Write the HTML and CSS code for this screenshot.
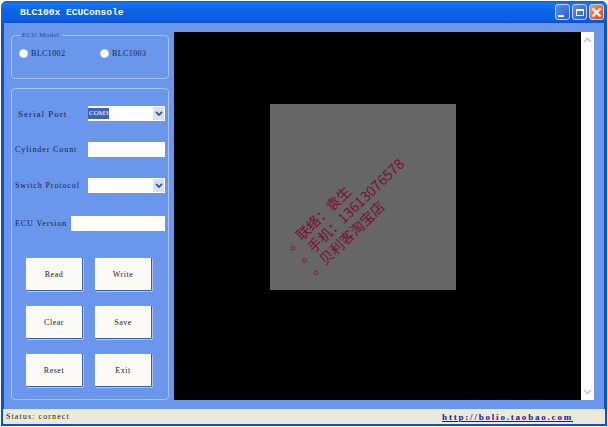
FILE: index.html
```html
<!DOCTYPE html>
<html lang="en">
<head>
    <meta charset="UTF-8">
    <meta name="viewport" content="width=device-width, initial-scale=1.0">
    <title>BLC100x ECUConsole</title>
    <link rel="stylesheet" href="styles.css">
</head>
<body>
    <div id="window">
        <div class="titleBar">
            <span class="titleText">BLC100x ECUConsole</span>
            <div class="winButtons">
                <span class="winBtn"><i class="minGlyph"></i></span>
                <span class="winBtn"><i class="maxGlyph"></i></span>
                <span class="winBtn closeBtn">
                    <svg width="13" height="13" viewBox="0 0 13 13"><path d="M2.5 2.5 L10.5 10.5 M10.5 2.5 L2.5 10.5" stroke="#ffffff" stroke-width="2.4" fill="none"/></svg>
                </span>
            </div>
        </div>
        <div class="client">
            <div class="sidePanel">
                <fieldset class="group modelGroup">
                    <legend>ECU Model</legend>
                    <label class="radioItem"><span class="radio"></span>BLC1002</label>
                    <label class="radioItem"><span class="radio"></span>BLC1003</label>
                </fieldset>
                <div class="group settingsGroup">
                    <div class="field serialRow">
                        <label>Serial Port</label>
                        <div class="combo"><span class="comboValue">COM3</span><span class="comboArrow"><svg width="8" height="6" viewBox="0 0 8 6"><path d="M1 1 L4 4 L7 1" stroke="#3d5a9c" stroke-width="1.8" fill="none"/></svg></span></div>
                    </div>
                    <div class="field cylinderRow">
                        <label>Cylinder Count</label>
                        <div class="textBox"></div>
                    </div>
                    <div class="field switchRow">
                        <label>Switch Protocol</label>
                        <div class="combo"><span class="comboArrow"><svg width="8" height="6" viewBox="0 0 8 6"><path d="M1 1 L4 4 L7 1" stroke="#3d5a9c" stroke-width="1.8" fill="none"/></svg></span></div>
                    </div>
                    <div class="field versionRow">
                        <label>ECU Version</label>
                        <div class="textBox wideBox"></div>
                    </div>
                    <div class="buttonGrid">
                        <button>Read</button>
                        <button>Write</button>
                        <button>Clear</button>
                        <button>Save</button>
                        <button>Reset</button>
                        <button>Exit</button>
                    </div>
                </div>
            </div>
            <div class="viewArea">
                <div class="display">
                    <div class="photo">
                        <!-- contact note printed diagonally on the picture -->
                        <div class="photoNote">
                            <div>。联络：袁生</div>
                            <div>。手机：13613076578</div>
                            <div>。贝利客淘宝店</div>
                        </div>
                    </div>
                </div>
                <div class="scrollBar">
                    <svg width="9" height="6" viewBox="0 0 9 6"><path d="M1 5 L4.5 1.5 L8 5" stroke="#c4cbc0" stroke-width="1.6" fill="none"/></svg>
                    <svg width="9" height="6" viewBox="0 0 9 6"><path d="M1 1 L4.5 4.5 L8 1" stroke="#c4cbc0" stroke-width="1.6" fill="none"/></svg>
                </div>
            </div>
        </div>
        <div class="statusBar">
            <span>Status: cornect</span>
            <a href="#">http://bolio.taobao.com</a>
        </div>
    </div>
</body>
</html>
```

FILE: styles.css
```css
html, body {
    margin: 0;
    padding: 0;
}

body {
    width: 608px;
    height: 427px;
    overflow: hidden;
    background: #ffffff;
    font-family: "Liberation Serif", "Noto Sans CJK SC", serif;
}

#window {
    width: 606px;
    height: 425px;
    margin: 1px 1px 0;
    box-sizing: border-box;
    display: flex;
    flex-direction: column;
    background: #0a4fdc;
    border-radius: 6px 6px 0 0;
    padding: 0 3px 3px;
}

.titleBar {
    height: 22px;
    flex: none;
    display: flex;
    align-items: center;
    justify-content: space-between;
    margin: 0 -3px;
    padding: 0 3px 0 19px;
    background: linear-gradient(#0b5ae8 0, #1478f0 12%, #0a62e6 45%, #0b5fe4 85%, #0a4fd0 100%);
    border-radius: 6px 6px 0 0;
}

.titleText {
    color: #ffffff;
    font-family: "Liberation Mono", monospace;
    font-size: 9.6px;
    font-weight: bold;
}

.winButtons {
    display: flex;
    gap: 2px;
}

.winBtn {
    width: 15px;
    height: 16px;
    box-sizing: border-box;
    display: flex;
    align-items: center;
    justify-content: center;
    border: 1px solid #c8d6f8;
    border-radius: 3px;
    background: linear-gradient(135deg, #5a8cf0, #2a5ad8);
}

.closeBtn {
    background: linear-gradient(135deg, #ee9a70, #d24a20);
}

.minGlyph {
    width: 6px;
    height: 2px;
    margin: 7px 4px 0 0;
    background: #ffffff;
}

.maxGlyph {
    width: 8px;
    height: 7px;
    box-sizing: border-box;
    border: 1px solid #ffffff;
    border-top-width: 2px;
}

.client {
    flex: 1;
    display: flex;
    gap: 5px;
    padding: 9px 10px 9px 7px;
    background: #6a96ec;
}

.sidePanel {
    width: 158px;
    flex: none;
    display: flex;
    flex-direction: column;
    gap: 9px;
}

.group {
    flex: none;
    margin: 0;
    box-sizing: border-box;
    border: 1px solid #a9c4f6;
    border-radius: 4px;
}

.modelGroup {
    width: 158px;
    min-width: 0;
    height: 47px;
    padding: 2px 7px 0;
    display: flex;
    align-items: flex-start;
}

.modelGroup legend {
    padding: 0 2px;
    margin-left: 1px;
    font-size: 7px;
    line-height: 7px;
    letter-spacing: 0.4px;
    color: #2a4a8c;
}

.radioItem {
    width: 81px;
    flex: none;
    margin-top: 8px;
    display: flex;
    align-items: center;
    gap: 3px;
    font-size: 8px;
    letter-spacing: 0.4px;
    color: #14244c;
}

.radio {
    width: 9px;
    height: 9px;
    box-sizing: border-box;
    border: 1px solid #dfe8fa;
    border-radius: 50%;
    background: #ffffff;
}

.settingsGroup {
    height: 312px;
    padding: 17px 3px 0;
}

.field {
    height: 15px;
    display: flex;
    align-items: center;
    justify-content: space-between;
    font-size: 8px;
    letter-spacing: 0.9px;
    color: #14244c;
}

.serialRow label {
    padding-left: 3px;
    font-size: 9px;
    letter-spacing: 1px;
}

.cylinderRow { margin-top: 21px; }
.switchRow { margin-top: 21px; }
.versionRow { margin-top: 23px; }

.combo, .textBox {
    width: 77px;
    height: 15px;
    box-sizing: border-box;
    background: #ffffff;
    display: flex;
    align-items: center;
    justify-content: space-between;
}

.wideBox {
    width: 94px;
    background: #fffffa;
}

.comboValue {
    padding: 0 1px;
    background: #3a62c0;
    color: #ffffff;
    font-size: 7px;
    line-height: 11px;
    letter-spacing: 0;
}

.combo .comboArrow {
    width: 11px;
    height: 13px;
    margin: 1px 1px 1px auto;
    display: flex;
    align-items: center;
    justify-content: center;
    background: #d6e0f6;
}

.buttonGrid {
    margin: 26px 0 0 10px;
    display: grid;
    grid-template-columns: 58px 58px;
    column-gap: 11px;
    grid-auto-rows: 34px;
    row-gap: 14px;
}

.buttonGrid button {
    padding: 0;
    border: 1px solid #3f5f9f;
    border-top-color: #7d9ad8;
    border-left-color: #7d9ad8;
    border-radius: 2px;
    background: #fbfaf5;
    box-shadow: 1px 1px 0 #a9c4f6;
    font-family: inherit;
    font-size: 8px;
    letter-spacing: 0.5px;
    color: #222222;
}

.viewArea {
    flex: 1;
    display: flex;
}

.display {
    flex: 1;
    padding: 72px 0 0 96px;
    background: #000000;
}

.photo {
    width: 186px;
    height: 186px;
    position: relative;
    background: #666666;
}

.photoNote {
    position: absolute;
    left: 12px;
    top: 137px;
    transform: rotate(-44deg);
    transform-origin: 0 0;
    font-family: "Noto Sans CJK SC", sans-serif;
    font-size: 14px;
    line-height: 17px;
    white-space: nowrap;
    color: #7a1030;
}

.scrollBar {
    width: 13px;
    flex: none;
    box-sizing: border-box;
    display: flex;
    flex-direction: column;
    align-items: center;
    justify-content: space-between;
    padding: 5px 0;
    background: #fdfdfb;
}

.statusBar {
    height: 15px;
    flex: none;
    box-sizing: border-box;
    margin: 0 -1px;
    display: flex;
    align-items: center;
    justify-content: space-between;
    padding: 0 32px 0 3px;
    background: #ece9d8;
    font-size: 8px;
    letter-spacing: 1.1px;
    color: #1c2418;
}

.statusBar a {
    color: #1414b4;
    font-size: 9px;
    font-weight: bold;
    letter-spacing: 1.8px;
    text-decoration: underline;
}
```
